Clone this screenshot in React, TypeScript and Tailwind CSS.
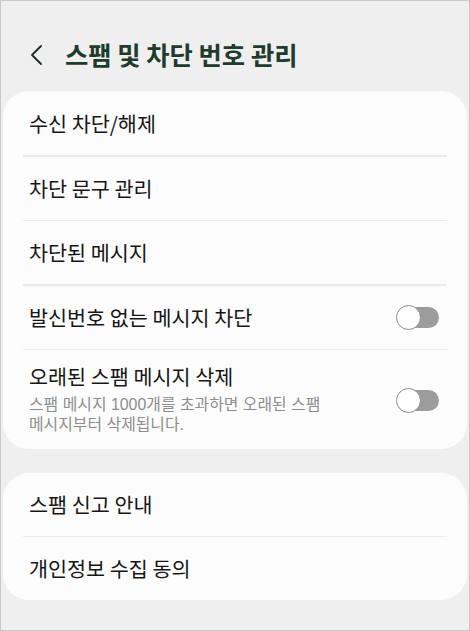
import React from "react";

const font = { fontFamily: '"Noto Sans CJK KR", "Noto Sans", sans-serif' };
const subFont = { fontFamily: '"Liberation Sans", "Noto Sans CJK KR", sans-serif' };

function Toggle() {
  return (
    <div className="relative w-[43px] h-[25px] shrink-0">
      <div className="absolute left-[4px] right-0 top-[2px] h-[21px] rounded-full bg-[#9c9c9c]" />
      <div className="absolute left-0 top-0 w-[25px] h-[25px] rounded-full bg-white border-[1.5px] border-[#8c8c8c]" />
    </div>
  );
}

function Divider() {
  return <div className="mx-[20px] h-[1.5px] bg-[#ebebeb]" />;
}

function Row({ label, toggle }: { label: string; toggle?: boolean }) {
  return (
    <div className="h-[63px] flex items-center justify-between pl-[26px] pr-[28px]">
      <span className="text-[20.7px] text-[#161616] leading-none">{label}</span>
      {toggle && <Toggle />}
    </div>
  );
}

export default function App() {
  return (
    <div
      className="w-[470px] h-[631px] bg-[#efefef] border border-[#c9c9c9] box-border overflow-hidden flex flex-col"
      style={font}
    >
      <div className="h-[90px] flex items-center pl-[28px] pt-[18px]">
        <svg width="16" height="24" viewBox="0 0 16 24" className="shrink-0">
          <path d="M12 3 L3 12 L12 21" fill="none" stroke="#1f2a22" strokeWidth="1.8" strokeLinecap="round" strokeLinejoin="round" />
        </svg>
        <span className="ml-[20px] text-[25.3px] font-bold text-[#1f3b2b] leading-none">
          스팸 및 차단 번호 관리
        </span>
      </div>

      <div className="mx-[2px] bg-[#fcfcfc] rounded-[26px] pt-[1px]">
        <Row label="수신 차단/해제" />
        <Divider />
        <Row label="차단 문구 관리" />
        <Divider />
        <Row label="차단된 메시지" />
        <Divider />
        <Row label="발신번호 없는 메시지 차단" toggle />
        <Divider />
        <div className="flex items-center justify-between pl-[26px] pr-[28px] pt-[16px] pb-[14px]">
          <div className="flex flex-col">
            <span className="text-[20.7px] text-[#161616] leading-none">오래된 스팸 메시지 삭제</span>
            <div className="mt-[8px] flex flex-col text-[15.9px] text-[#8d8d8d] whitespace-nowrap" style={subFont}>
              <div className="h-[20px] leading-[20px]">스팸 메시지 1000개를 초과하면 오래된 스팸</div>
              <div className="h-[20px] leading-[20px]">메시지부터 삭제됩니다.</div>
            </div>
          </div>
          <Toggle />
        </div>
      </div>

      <div className="mt-[24px] mx-[2px] bg-[#fcfcfc] rounded-[26px]">
        <Row label="스팸 신고 안내" />
        <Divider />
        <Row label="개인정보 수집 동의" />
      </div>
    </div>
  );
}
